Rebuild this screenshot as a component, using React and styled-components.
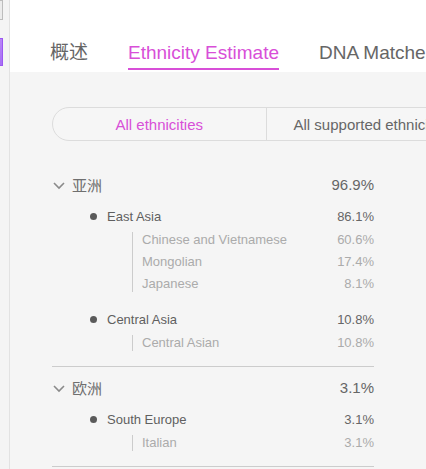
import React from "react";
import styled, { createGlobalStyle } from "styled-components";

const GlobalStyle = createGlobalStyle`
  html, body {
    margin: 0;
    padding: 0;
    overflow: hidden;
    background: #f5f5f5;
  }
  body {
    font-family: "Liberation Sans", Arial, "Noto Sans CJK SC", sans-serif;
  }
`;

const PINK = "#d84fd8";

const Page = styled.div`
  display: flex;
  min-height: 469px;
  width: 426px;
  overflow: hidden;
`;

const Sidebar = styled.aside`
  width: 9px;
  flex: none;
  background: #f4f4f4;
  border-right: 1px solid #e2e2e2;
  display: flex;
  flex-direction: column;
`;

const SideButton = styled.div`
  width: 2px;
  height: 18px;
  background: #ececec;
  border: 1px solid #bdbdbd;
  border-left: none;
`;

const SideActive = styled.div`
  margin-top: 18px;
  width: 2px;
  height: 26px;
  background: linear-gradient(180deg, #b885f7, #a76ff4);
  border: 1px solid #9b57f2;
  border-left: none;
`;

const Main = styled.main`
  flex: 1;
  min-width: 0;
  display: flex;
  flex-direction: column;
`;

const Header = styled.header`
  height: 72px;
  background: #fff;
  display: flex;
  align-items: flex-end;
  gap: 40px;
  padding-left: 40px;
  box-sizing: border-box;
  white-space: nowrap;
`;

const Tab = styled.div`
  font-size: 19px;
  line-height: 22px;
  padding-bottom: 4px;
  margin-bottom: 2px;
  color: ${(p) => (p.$active ? PINK : "#666")};
  border-bottom: 2px solid ${(p) => (p.$active ? PINK : "transparent")};
  font-family: "Liberation Sans", Arial, "Noto Sans CJK SC", sans-serif;
`;

const Content = styled.section`
  padding: 35px 0 0 42px;
`;

const Segment = styled.div`
  display: flex;
  width: 428px;
  height: 34px;
  box-sizing: border-box;
  border: 1px solid #dcdcdc;
  border-radius: 17px 0 0 17px;
  background: #f6f6f6;
`;

const SegButton = styled.div`
  flex: 1;
  display: flex;
  align-items: center;
  justify-content: center;
  font-size: 15px;
  white-space: nowrap;
  color: ${(p) => (p.$active ? PINK : "#666")};
  & + & {
    border-left: 1px solid #dcdcdc;
  }
`;

const List = styled.div`
  margin-top: 23px;
  width: 322px;
`;

const Region = styled.div`
  border-bottom: 1px solid #cccccc;
  padding: 5px 0 13px;
  display: flex;
  flex-direction: column;
`;

const RegionHeader = styled.div`
  display: flex;
  align-items: center;
  height: 30px;
  font-size: 15px;
  color: #666;
`;

const Chevron = styled.svg`
  width: 12px;
  height: 12px;
  margin-left: 1px;
  flex: none;
`;

const RegionName = styled.span`
  margin-left: 7px;
  font-family: "Noto Sans CJK SC", sans-serif;
  color: #6f6f6f;
`;

const Pct = styled.span`
  margin-left: auto;
  color: ${(p) => p.$color || "#666"};
`;

const Groups = styled.div`
  display: flex;
  flex-direction: column;
  gap: 13px;
  margin-top: 5px;
`;

const Group = styled.div`
  display: flex;
  flex-direction: column;
`;

const GroupHeader = styled.div`
  display: flex;
  align-items: center;
  height: 24px;
  padding-left: 38px;
  font-size: 13px;
  color: #5f5f5f;
`;

const Dot = styled.span`
  width: 7px;
  height: 7px;
  border-radius: 50%;
  background: #5a5a5a;
  margin-right: 10px;
  flex: none;
`;

const SubList = styled.div`
  position: relative;
  margin-left: 80px;
  padding-left: 10px;
  &::before {
    content: "";
    position: absolute;
    left: 0;
    top: 4px;
    bottom: 2px;
    width: 1px;
    background: #cccccc;
  }
`;

const SubItem = styled.div`
  display: flex;
  align-items: center;
  height: 22px;
  font-size: 13px;
  color: #ababab;
`;

const data = [
  {
    name: "亚洲",
    pct: "96.9%",
    groups: [
      {
        name: "East Asia",
        pct: "86.1%",
        items: [
          ["Chinese and Vietnamese", "60.6%"],
          ["Mongolian", "17.4%"],
          ["Japanese", "8.1%"],
        ],
      },
      {
        name: "Central Asia",
        pct: "10.8%",
        items: [["Central Asian", "10.8%"]],
      },
    ],
  },
  {
    name: "欧洲",
    pct: "3.1%",
    groups: [
      {
        name: "South Europe",
        pct: "3.1%",
        items: [["Italian", "3.1%"]],
      },
    ],
  },
];

export default function App() {
  return (
    <>
      <GlobalStyle />
      <Page>
        <Sidebar>
          <SideButton />
          <SideActive />
        </Sidebar>
        <Main>
          <Header>
            <Tab>概述</Tab>
            <Tab $active>Ethnicity Estimate</Tab>
            <Tab>DNA Matches</Tab>
          </Header>
          <Content>
            <Segment>
              <SegButton $active>All ethnicities</SegButton>
              <SegButton>All supported ethnicities</SegButton>
            </Segment>
            <List>
              {data.map((r) => (
                <Region key={r.name}>
                  <RegionHeader>
                    <Chevron viewBox="0 0 12 12">
                      <path
                        d="M1 5 L6 10 L11 5"
                        fill="none"
                        stroke="#8a8a8a"
                        strokeWidth="1.6"
                      />
                    </Chevron>
                    <RegionName>{r.name}</RegionName>
                    <Pct>{r.pct}</Pct>
                  </RegionHeader>
                  <Groups>
                    {r.groups.map((g) => (
                      <Group key={g.name}>
                        <GroupHeader>
                          <Dot />
                          <span>{g.name}</span>
                          <Pct>{g.pct}</Pct>
                        </GroupHeader>
                        <SubList>
                          {g.items.map(([n, p]) => (
                            <SubItem key={n}>
                              <span>{n}</span>
                              <Pct $color="#ababab">{p}</Pct>
                            </SubItem>
                          ))}
                        </SubList>
                      </Group>
                    ))}
                  </Groups>
                </Region>
              ))}
            </List>
          </Content>
        </Main>
      </Page>
    </>
  );
}
